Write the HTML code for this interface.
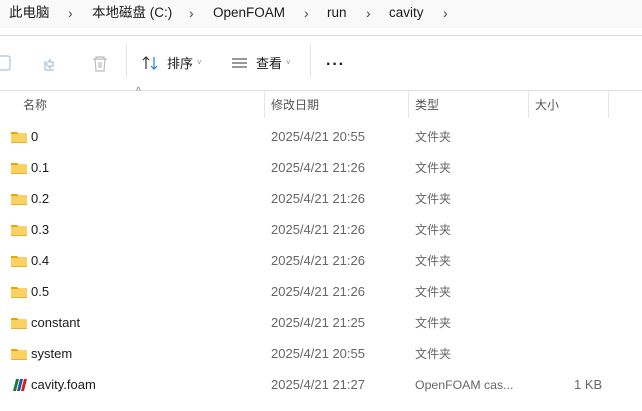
<!DOCTYPE html>
<html><head><meta charset="utf-8"><style>
body{margin:0;width:642px;height:411px;overflow:hidden;background:#fff;font-family:"Liberation Sans","Noto Sans CJK SC",sans-serif;font-size:13px;line-height:16px;color:#1a1a1a;position:relative}
.a{position:absolute;white-space:nowrap}
.crumb{top:0;left:0;width:642px;height:28px;background:#f9f9f9}
.line{left:0;width:642px;height:1px;background:#dcdcdc}
.hd{color:#555;top:97px;font-size:12px}
.vs{top:90px;width:1px;height:28px;background:#e5e5e5}
.n{left:31px}.d{left:271px;color:#666}.t{left:415px;color:#666;font-size:12px}
.f{left:11px;width:16px;height:12px}
.bc{top:5px;font-size:13.5px}
.ch{top:5px;font-size:14px;color:#444}
</style></head><body>
<div class="a crumb"></div>
<div class="a bc" style="left:9px">此电脑</div>
<div class="a ch" style="left:68px">›</div>
<div class="a bc" style="left:92px">本地磁盘 (C:)</div>
<div class="a ch" style="left:189px">›</div>
<div class="a bc" style="left:213px">OpenFOAM</div>
<div class="a ch" style="left:304px">›</div>
<div class="a bc" style="left:327px">run</div>
<div class="a ch" style="left:366px">›</div>
<div class="a bc" style="left:389px">cavity</div>
<div class="a ch" style="left:443px">›</div>
<div class="a line" style="top:35px"></div>
<svg class="a" style="left:0;top:54px" width="110" height="20" fill="none" stroke="#a9c3dc" stroke-width="1.2"><rect x="-4" y="2" width="14" height="14" rx="2"/><path d="M46 10l4-4v2h3v4h-3v2zM45 7v9h9" /><path d="M93 5h14M96 5v-2h8v2M95 5l1 12h8l1-12M99 8v6M101 8v6" stroke="#bbb"/></svg>
<div class="a" style="left:126px;top:44px;width:1px;height:34px;background:#e5e5e5"></div>
<svg class="a" style="left:142px;top:55px" width="18" height="16" fill="none" stroke-width="1.2"><path d="M4 14V2M1 5l3-3 3 3" stroke="#333"/><path d="M12 2v12M9 11l3 3 3-3" stroke="#2b7bd3"/></svg>
<div class="a" style="left:167px;top:56px">排序</div>
<div class="a" style="left:197px;top:55px;font-size:8px;color:#888">˅</div>
<svg class="a" style="left:231px;top:58px" width="18" height="12" stroke="#333" stroke-width="1.1"><path d="M1 1h15M1 5h15M1 9h15"/></svg>
<div class="a" style="left:256px;top:56px">查看</div>
<div class="a" style="left:286px;top:55px;font-size:8px;color:#888">˅</div>
<div class="a" style="left:310px;top:44px;width:1px;height:34px;background:#e5e5e5"></div>
<div class="a" style="left:326px;top:57px;font-size:16px;font-weight:bold;letter-spacing:1px">···</div>
<div class="a line" style="top:90px"></div>
<div class="a" style="left:136px;top:84px;font-size:10px;color:#777">^</div>
<div class="a hd" style="left:23px">名称</div>
<div class="a vs" style="left:264px"></div>
<div class="a hd" style="left:271px">修改日期</div>
<div class="a vs" style="left:408px"></div>
<div class="a hd" style="left:415px">类型</div>
<div class="a vs" style="left:528px"></div>
<div class="a hd" style="left:535px">大小</div>
<div class="a vs" style="left:608px"></div>

<div id="rows"></div>
<script>
var r=[["0","20:55"],["0.1","21:26"],["0.2","21:26"],["0.3","21:26"],["0.4","21:26"],["0.5","21:26"],["constant","21:25"],["system","20:55"]];
var h="";
r.forEach(function(x,i){var y=129+31*i;
h+='<svg class="a f" style="top:'+(y+2)+'px" viewBox="0 0 16 12"><path d="M0 1h6l1.5 1.5H16V12H0z" fill="#e9a800"/><rect x="0" y="3" width="16" height="9" fill="#fbd262"/><rect x="0" y="11" width="16" height="1" fill="#e6b030"/></svg>';
h+='<div class="a n" style="top:'+y+'px">'+x[0]+'</div><div class="a d" style="top:'+y+'px">2025/4/21 '+x[1]+'</div><div class="a t" style="top:'+y+'px">文件夹</div>';});
var y=377;
h+='<svg class="a" style="left:11px;top:'+(y+2)+'px" width="16" height="12"><path d="M2 12L5 0h3L5 12z" fill="#1a7a3a"/><path d="M6 12L9 0h3L9 12z" fill="#2a4fa8"/><path d="M10 12L13 0h3l-3 12z" fill="#d02020"/></svg>';
h+='<div class="a n" style="top:'+y+'px">cavity.foam</div><div class="a d" style="top:'+y+'px">2025/4/21 21:27</div><div class="a t" style="top:'+y+'px;font-size:12.3px">OpenFOAM cas...</div><div class="a" style="left:574px;top:'+y+'px;color:#666">1 KB</div>';
document.getElementById("rows").innerHTML=h;
</script>
</body></html>
